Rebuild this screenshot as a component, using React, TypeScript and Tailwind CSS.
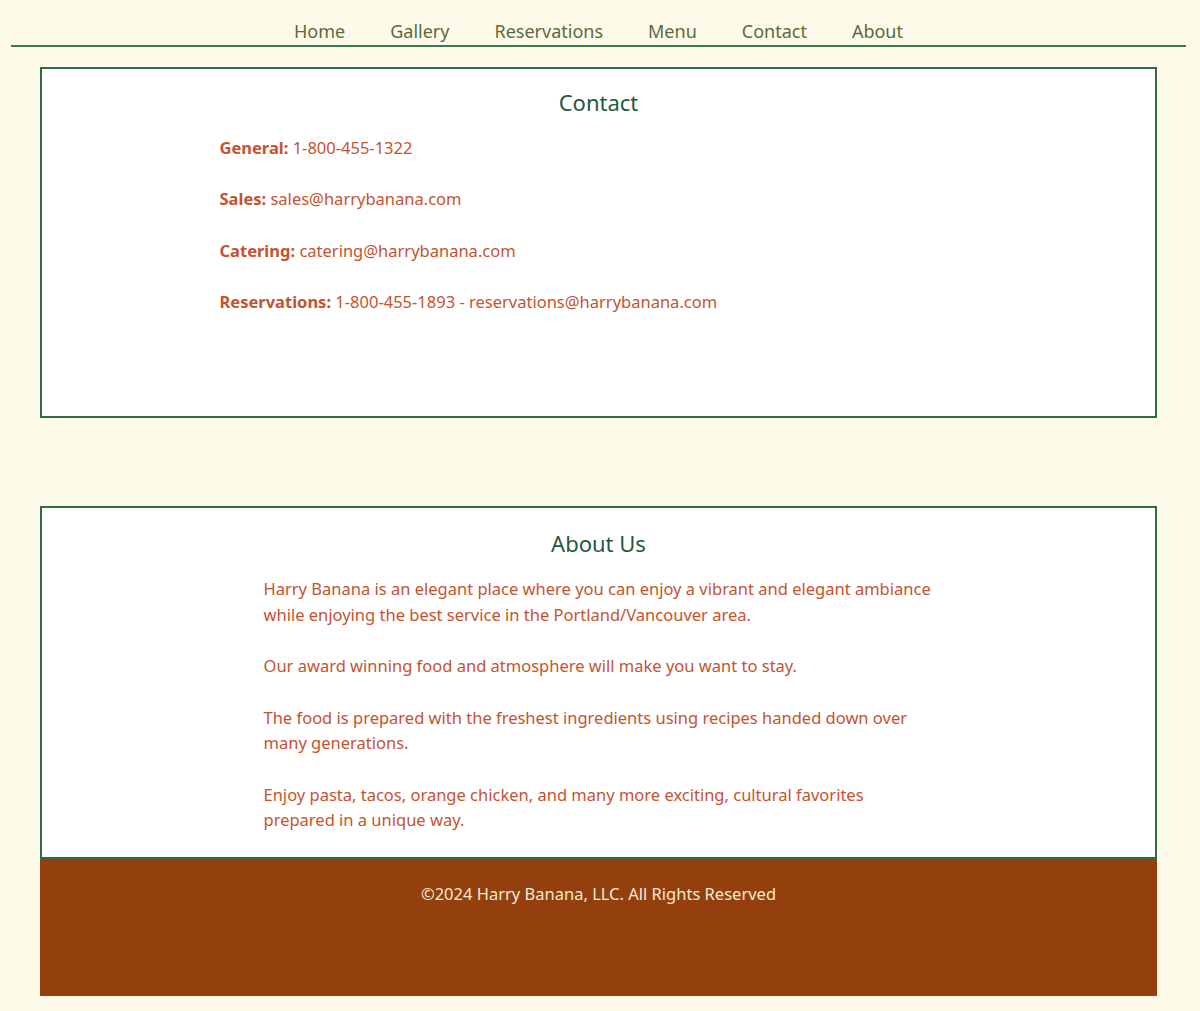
import React from 'react'

const NAV = ['Home', 'Gallery', 'Reservations', 'Menu', 'Contact', 'About']

function Contact() {
  return (
    <section className="ml-[40px] mt-[20px] h-[351px] w-[1117px] border-2 border-[#2f6b43] bg-white">
      <h2 className="mt-[17px] text-center text-[22px] leading-[32px] text-[#1f5a3c]">Contact</h2>
      <div className="mx-auto mt-[17px] w-[758px] text-[16.5px] leading-[25.7px] text-[#c5532f]">
        <p>
          <b className="font-bold">General:</b> 1-800-455-1322
          <br />
          <br />
          <b className="font-bold">Sales:</b> sales@harrybanana.com
          <br />
          <br />
          <b className="font-bold">Catering:</b> catering@harrybanana.com
          <br />
          <br />
          <b className="font-bold">Reservations:</b> 1-800-455-1893 - reservations@harrybanana.com
        </p>
      </div>
    </section>
  )
}

function About() {
  return (
    <section className="ml-[40px] mt-[88px] h-[351px] w-[1117px] border-2 border-b-0 border-[#2f6b43] bg-white">
      <h2 className="mt-[19px] text-center text-[22px] leading-[32px] text-[#1f5a3c]">About Us</h2>
      <div className="mx-auto mt-[17px] w-[670px] text-[16.5px] leading-[25.7px] text-[#c5532f]">
        <p>
          Harry Banana is an elegant place where you can enjoy a vibrant and elegant ambiance while enjoying the best
          service in the Portland/Vancouver area.
          <br />
          <br />
          Our award winning food and atmosphere will make you want to stay.
          <br />
          <br />
          The food is prepared with the freshest ingredients using recipes handed down over many generations.
          <br />
          <br />
          Enjoy pasta, tacos, orange chicken, and many more exciting, cultural favorites prepared in a unique way.
        </p>
      </div>
    </section>
  )
}

export default function App() {
  return (
    <div className="min-h-[1011px] bg-[#fefae9] pb-[15px] pt-[18px] font-['Noto_Sans',sans-serif]">
      <nav className="mx-[11px] w-[1175px] border-b-2 border-[#3f7a4e]">
        <ul className="flex justify-center gap-[45px] pb-[1px] text-[18px] leading-[26px] text-[#5a6a3c]">
          {NAV.map((n) => (
            <li key={n}>{n}</li>
          ))}
        </ul>
      </nav>
      <Contact />
      <About />
      <footer className="ml-[40px] h-[139px] w-[1117px] border-t-2 border-[#2f6b43] bg-[#933f0e] pt-[23px] text-center text-[16.5px] leading-[24px] text-[#f6ead2]">
        ©2024 Harry Banana, LLC. All Rights Reserved
      </footer>
    </div>
  )
}
